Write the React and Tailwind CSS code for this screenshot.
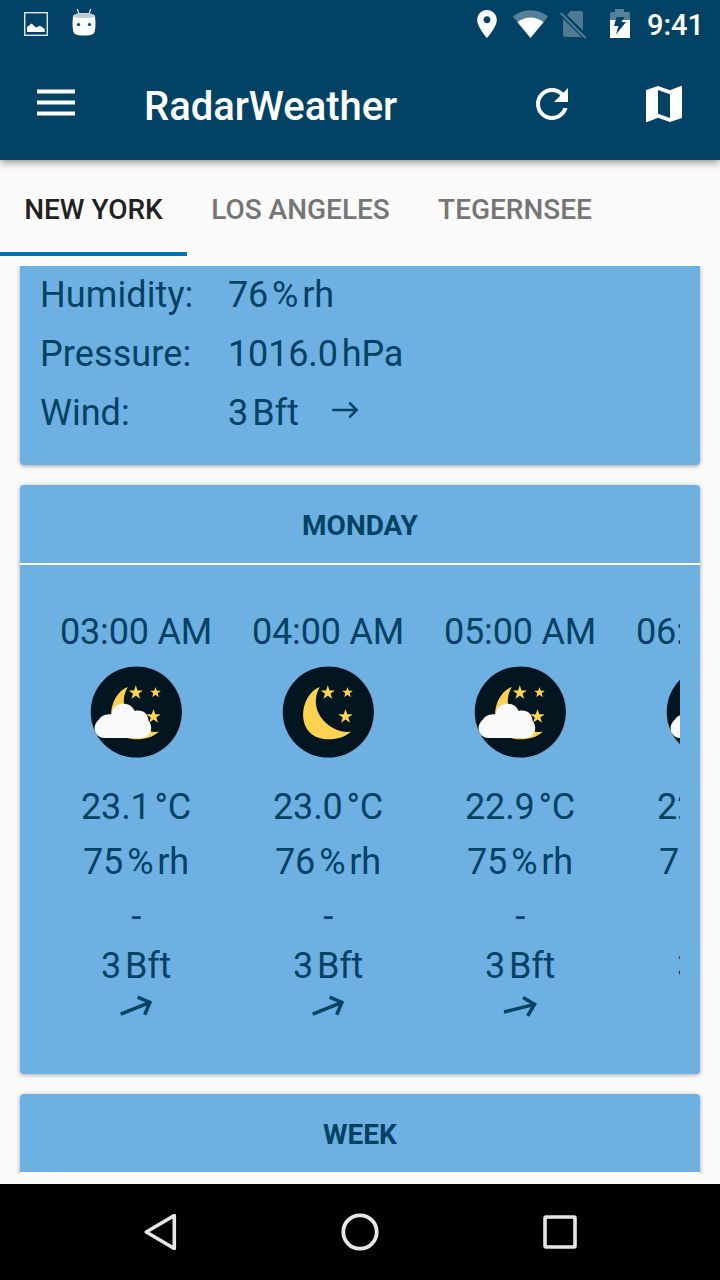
const THIN = "\u2009";

const hours = [
  { time: "03:00 AM", cloudy: true, temp: "23.1", humidity: "75", wind: "3", angle: -22 },
  { time: "04:00 AM", cloudy: false, temp: "23.0", humidity: "76", wind: "3", angle: -22 },
  { time: "05:00 AM", cloudy: true, temp: "22.9", humidity: "75", wind: "3", angle: -14 },
  { time: "06:00 AM", cloudy: true, temp: "22.9", humidity: "75", wind: "3", angle: -14 },
];

function Unit({ children }) {
  return (
    <>
      <span className="inline-block w-[4px] overflow-hidden whitespace-pre align-bottom">{THIN}</span>
      {children}
    </>
  );
}

function star(cx, cy, r) {
  return Array.from({ length: 10 }, (_, i) => {
    const a = (Math.PI * i) / 5 - Math.PI / 2;
    const k = i % 2 ? r * 0.39 : r;
    return `${cx + k * Math.cos(a)},${cy + k * Math.sin(a)}`;
  }).join(" ");
}

function NightIcon({ cloudy }) {
  return (
    <svg className="size-[92px] shrink-0" viewBox="-0.3 0 92 92">
      <circle cx="46" cy="46" r="45.6" fill="#03151f" />
      <g fill="#ffd34f">
        <path d="M37.5 21C27 25 20.8 37 20.8 48.5C20.8 64 31 73.3 46 73.3C55 73.3 63 71 68.5 65.8C47 68 24 44 37.5 21Z" />
        <polygon points={star(45.5, 26.8, 7.5)} />
        <polygon points={star(65.2, 26.6, 5.7)} />
        <polygon points={star(63.2, 50.6, 7.5)} />
      </g>
      {cloudy && (
        <path
          d="M14 72C8.500 72 4.300 67.500 4.300 62.500C4.300 57.500 7.500 54.500 9 53C11.500 49.500 15 48.200 21.500 48.200C22 41.500 27 37.800 33 37.800C38.500 37.800 42.500 40.500 44.300 45C52 43.300 58 47 58.300 55C60 57 60.900 59.500 60.900 62C60.900 67.500 56.500 72 51 72Z"
          fill="#fafafa"
        />
      )}
    </svg>
  );
}

function Arrow({ angle, className, strokeWidth }) {
  return (
    <svg className={className} viewBox="-18 -18 36 36" fill="none" stroke="#024265" strokeWidth={strokeWidth}>
      <g transform={`rotate(${angle})`}>
        <path d="M-16.500 0H15M5.500 -9.500L15 0L5.500 9.500" />
      </g>
    </svg>
  );
}

function StatusBar() {
  return (
    <div className="flex h-12 items-center pr-4 pl-6">
      <svg className="size-6" viewBox="0 0 24 24">
        <rect x="0.700" y="0.700" width="22.600" height="22.600" fill="none" stroke="#dfe8ed" strokeWidth="1.400" />
        <path d="M3 20V15L7.500 11.500L12 15.500L16 13.800L20.800 17V20Z" fill="#fff" />
      </svg>
      <svg className="mb-[5px] ml-6 h-7 w-6" viewBox="0 0 24 28">
        <path d="M5.300 1L7 6M18.700 1L17 6" stroke="#dfe8ed" strokeWidth="1.200" />
        <path d="M1 8C.3 14 .3 20 1.500 24C2.500 26 4 27.500 12 27.500S21.500 26 22.500 24C23.700 20 23.700 14 23 8C21 4 3 4 1 8Z" fill="#fff" />
        <path d="M1.200 8.500C2 4 22 4 22.800 8.500C20 10.800 4 10.800 1.200 8.500Z" fill="#bccdd6" />
        <circle cx="6.500" cy="16.500" r="1.600" fill="#024265" />
        <circle cx="17.500" cy="16.500" r="1.600" fill="#024265" />
      </svg>
      <svg className="ml-[381px] h-7 w-5" viewBox="5 2 14 20">
        <path fill="#fff" d="M12 2C8.130 2 5 5.130 5 9c0 5.250 7 13 7 13s7-7.750 7-13c0-3.870-3.130-7-7-7zm0 9.500c-1.380 0-2.500-1.120-2.500-2.500s1.120-2.500 2.500-2.500 2.500 1.120 2.500 2.500-1.120 2.500-2.500 2.500z" />
      </svg>
      <svg className="ml-[15.500px] h-7 w-[35px]" viewBox="0 0 35 28">
        <path d="M0 6.500C10 -1.800 25 -1.800 35 6.500L30 13C23 6 12 6 5 13Z" fill="#54809a" />
        <path d="M4.500 12.300C12 5.800 23 5.800 30.500 12.300L17.500 28Z" fill="#fff" />
      </svg>
      <svg className="mt-0.5 ml-[12px] h-7 w-[27px]" viewBox="0 0 27 28" fill="#4e7b93">
        <path d="M10.500 0H21Q23 0 23 2V19.500L7 4Z" />
        <path d="M3 7.500L21.500 26H5Q3 26 3 24Z" />
        <path d="M0.700 2L25.500 27" stroke="#4e7b93" strokeWidth="2" />
      </svg>
      <svg className="mb-px ml-[23px] h-[29px] w-5" viewBox="0 0 20 29">
        <path d="M0 4.500Q0 3 1.500 3H5V0H14V3H18.500Q20 3 20 4.500V12H0Z" fill="#54809a" />
        <path d="M0 11H20V29H0Z" fill="#fff" />
        <path d="M6.500 8H14.500L11.500 13H16L6 25.500L8.500 17H4Z" fill="#024265" />
      </svg>
      <span className="mt-0.5 ml-auto text-[29px] leading-[34px] font-medium text-white">9:41</span>
    </div>
  );
}

function Card({ title, className = "", children }) {
  return (
    <section className={`shrink-0 rounded-[4px] bg-[#6fb0e3] shadow-[0_1px_4px_rgba(0,0,0,0.35)] ${className}`}>
      {title && (
        <h2 className="flex h-20 items-center justify-center border-b-2 border-white pt-1 text-[28px] leading-8 font-bold">
          {title}
        </h2>
      )}
      {children}
    </section>
  );
}

export default function App() {
  return (
    <div className="flex h-[1280px] w-[720px] flex-col overflow-hidden bg-[#fafafa] font-['Roboto',sans-serif] text-[#024265]">
      <header className="relative z-10 h-40 shrink-0 bg-[#024265] shadow-[0_2px_8px_rgba(0,0,0,0.45)]">
        <StatusBar />
        <div className="flex h-28 items-center pr-9 pl-[37px] text-white">
          <svg className="mb-[3px] h-[27px] w-[38px]" viewBox="0 0 38 27" fill="#fff">
            <path d="M0 0.500H38V4.500H0ZM0 11.500H38V15.500H0ZM0 22.500H38V26.500H0Z" />
          </svg>
          <h1 className="mt-1.5 ml-[69px] text-[40px] leading-[48px] font-medium tracking-[-0.05px]">RadarWeather</h1>
          <svg className="ml-auto size-12" viewBox="0 0 24 24" fill="#fff">
            <path d="M17.650 6.350C16.200 4.900 14.210 4 12 4c-4.420 0-7.990 3.580-7.990 8s3.570 8 7.990 8c3.730 0 6.840-2.550 7.730-6h-2.080c-.820 2.330-3.040 4-5.650 4-3.310 0-6-2.690-6-6s2.690-6 6-6c1.660 0 3.140.690 4.220 1.780L13 11h7V4l-2.350 2.350z" />
          </svg>
          <svg className="-mr-1 ml-16 size-12" viewBox="0 0 24 24" fill="#fff">
            <path d="M20.500 3l-.160.030L15 5.100 9 3 3.360 4.900c-.210.070-.360.250-.360.480V20.500c0 .280.220.500.500.500l.160-.030L9 18.900l6 2.100 5.640-1.900c.210-.070.360-.250.360-.480V3.500c0-.280-.220-.500-.500-.500zM15 19l-6-2.110V5l6 2.110V19z" />
          </svg>
        </div>
      </header>
      <nav className="flex h-24 shrink-0 text-[28px] leading-8 font-medium text-[#757575]">
        <div className="flex w-[187px] items-center justify-center border-b-4 border-[#0274b2] pt-2 text-[#212121]">
          NEW YORK
        </div>
        <div className="flex w-[227px] items-center justify-center pt-1">LOS ANGELES</div>
        <div className="flex w-[202px] items-center justify-center pt-1">TEGERNSEE</div>
      </nav>
      <main className="mt-2.5 flex h-[908px] shrink-0 flex-col gap-5 overflow-hidden px-5">
        <Card className="h-[199px] rounded-t-none pt-2">
          <dl className="grid grid-cols-[188px_1fr] px-5 text-[36px] leading-[42px]">
            <dt className="h-[59px] tracking-[0.1px]">Humidity:</dt>
            <dd className="tracking-[-0.2px]">76<Unit>%</Unit><Unit>rh</Unit></dd>
            <dt className="h-[59px] tracking-[0.1px]">Pressure:</dt>
            <dd className="tracking-[-0.15px]">1016.0<Unit>hPa</Unit></dd>
            <dt>Wind:</dt>
            <dd className="flex items-center">
              <span className="tracking-[-0.1px]">3<Unit>Bft</Unit></span>
              <Arrow angle={0} strokeWidth={3.200} className="mb-1.5 ml-[32px] size-[28px]" />
            </dd>
          </dl>
        </Card>
        <Card title="MONDAY" className="h-[589px]">
          <div className="mx-5 flex overflow-hidden pt-[46px] text-[36px] leading-[42px] tracking-[-0.2px]">
            {hours.map((h) => (
              <div key={h.time} className="flex w-48 shrink-0 flex-col items-center">
                <span className="whitespace-nowrap">{h.time}</span>
                <div className="mt-[13px] mb-7">
                  <NightIcon cloudy={h.cloudy} />
                </div>
                <span className="mb-[13px]">{h.temp}<Unit>°C</Unit></span>
                <span className="mb-[13px]">{h.humidity}<Unit>%</Unit><Unit>rh</Unit></span>
                <span className="mb-[7px]">-</span>
                <span>{h.wind}<Unit>Bft</Unit></span>
                <Arrow angle={h.angle} strokeWidth={3.500} className="mt-[3px] size-9" />
              </div>
            ))}
          </div>
        </Card>
        <Card title="WEEK" className="h-[300px]" />
      </main>
      <footer className="mt-auto flex h-24 shrink-0 items-center justify-center gap-[163px] bg-black">
        <svg className="size-9" viewBox="0 0 36 36" fill="none" stroke="#e6e6e6" strokeWidth="3.600" strokeLinejoin="round">
          <path d="M32.300 1.500V34.500L4.300 18Z" />
        </svg>
        <svg className="size-[38px]" viewBox="0 0 38 38" fill="none" stroke="#e6e6e6" strokeWidth="3.800">
          <circle cx="19" cy="19" r="16.700" />
        </svg>
        <svg className="size-9" viewBox="0 0 36 36" fill="none" stroke="#e6e6e6" strokeWidth="3.600">
          <rect x="3" y="3" width="30" height="30" rx="1" />
        </svg>
      </footer>
    </div>
  );
}
